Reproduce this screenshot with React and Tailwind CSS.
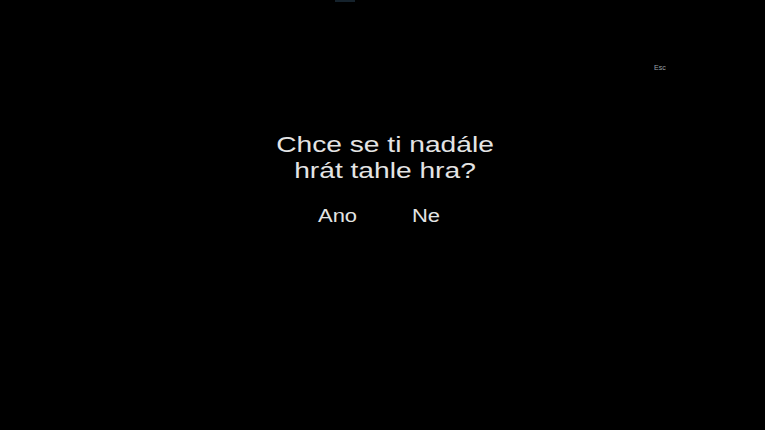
export default function App() {
  return (
    <div className="w-[765px] h-[430px] bg-black overflow-hidden flex flex-col" style={{ fontFamily: '"Liberation Sans", Arial, sans-serif' }}>
      <div className="ml-[335px] w-[20px] h-[2px] bg-[#15222c]" />
      <div className="mt-[62px] ml-[654px] h-[8px] text-[7px] leading-[8px] text-[#9aa0a8]">Esc</div>
      <div className="mt-[60px] pl-[4px] flex flex-col items-center">
        <div className="scale-x-[1.28] text-center text-[22px] leading-[26px] text-[#e4e4e4]">
          <div>Chce se ti nadále</div>
          <div>hrát tahle hra?</div>
        </div>
        <div className="mt-[22px] -ml-[10px] flex gap-[45px] scale-x-[1.22] text-[18px] leading-[20px] text-[#e4e4e4]">
          <span>Ano</span>
          <span>Ne</span>
        </div>
      </div>
    </div>
  );
}
